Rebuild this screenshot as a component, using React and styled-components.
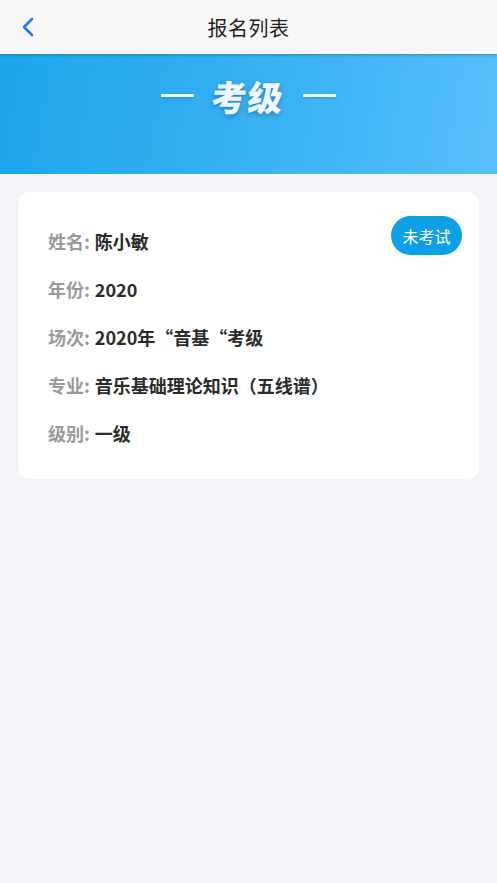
import React from "react";
import styled, { createGlobalStyle } from "styled-components";

const Global = createGlobalStyle`
  html, body { margin: 0; padding: 0; background: #f3f4f8; }
  body { font-family: "Noto Sans CJK SC", "Noto Sans", sans-serif; }
  * { box-sizing: border-box; }
`;

const Page = styled.div`
  width: 497px;
  min-height: 883px;
  background: #f3f4f8;
  display: flex;
  flex-direction: column;
`;

const NavBar = styled.header`
  position: relative;
  height: 54px;
  background: #f7f7f7;
  display: flex;
  align-items: center;
  justify-content: center;
  box-shadow: 0 1px 3px rgba(0, 0, 0, 0.25);
  z-index: 2;
`;

const BackButton = styled.button`
  position: absolute;
  left: 14px;
  top: 13px;
  width: 28px;
  height: 28px;
  border: 0;
  background: none;
  padding: 0;
  display: flex;
  align-items: center;
  justify-content: center;
`;

const NavTitle = styled.h1`
  margin: 0;
  font-size: 20px;
  font-weight: 400;
  color: #1f1f1f;
  letter-spacing: 0.5px;
`;

const Banner = styled.div`
  height: 120px;
  background: linear-gradient(100deg, #1ca5ec 0%, #36b1f2 50%, #57bffb 100%);
  display: flex;
  justify-content: center;
  padding-top: 18px;
`;

const BannerTitle = styled.div`
  display: flex;
  align-items: center;
  gap: 18px;
  height: 46px;
  color: #eef7fd;
  text-shadow: 0 2px 5px rgba(0, 40, 90, 0.35);
`;

const Dash = styled.span`
  width: 33px;
  height: 3px;
  background: #eef7fd;
  box-shadow: 0 1px 3px rgba(0, 40, 90, 0.25);
`;

const BannerText = styled.span`
  font-size: 35px;
  font-weight: 900;
  letter-spacing: 1px;
  transform: skewX(-6deg);
  line-height: 1;
`;

const Card = styled.section`
  position: relative;
  margin: 18px 18px 0;
  background: #fff;
  border-radius: 12px;
  padding: 25px 30px 22px;
`;

const Row = styled.div`
  height: 48px;
  display: flex;
  align-items: center;
  font-size: 18px;
  font-weight: 700;
`;

const Label = styled.span`
  color: #9a9a9a;
  margin-right: 5px;
`;

const Value = styled.span`
  color: #2b2b2b;
`;

const Badge = styled.span`
  position: absolute;
  top: 24px;
  right: 17px;
  width: 71px;
  height: 39px;
  border-radius: 20px;
  background: #0ea0e6;
  color: #fff;
  font-size: 16px;
  display: flex;
  align-items: center;
  justify-content: center;
`;

const rows = [
  ["姓名:", "陈小敏"],
  ["年份:", "2020"],
  ["场次:", "2020年“音基“考级"],
  ["专业:", "音乐基础理论知识（五线谱）"],
  ["级别:", "一级"],
];

export default function App() {
  return (
    <Page>
      <Global />
      <NavBar>
        <BackButton aria-label="back">
          <svg width="14" height="20" viewBox="0 0 14 20">
            <path d="M11 2 L3 10 L11 18" fill="none" stroke="#1a7cf5" strokeWidth="2.6" strokeLinecap="round" strokeLinejoin="round" />
          </svg>
        </BackButton>
        <NavTitle>报名列表</NavTitle>
      </NavBar>
      <Banner>
        <BannerTitle>
          <Dash />
          <BannerText>考级</BannerText>
          <Dash />
        </BannerTitle>
      </Banner>
      <Card>
        <Badge>未考试</Badge>
        {rows.map(([l, v]) => (
          <Row key={l}>
            <Label>{l}</Label>
            <Value>{v}</Value>
          </Row>
        ))}
      </Card>
    </Page>
  );
}
